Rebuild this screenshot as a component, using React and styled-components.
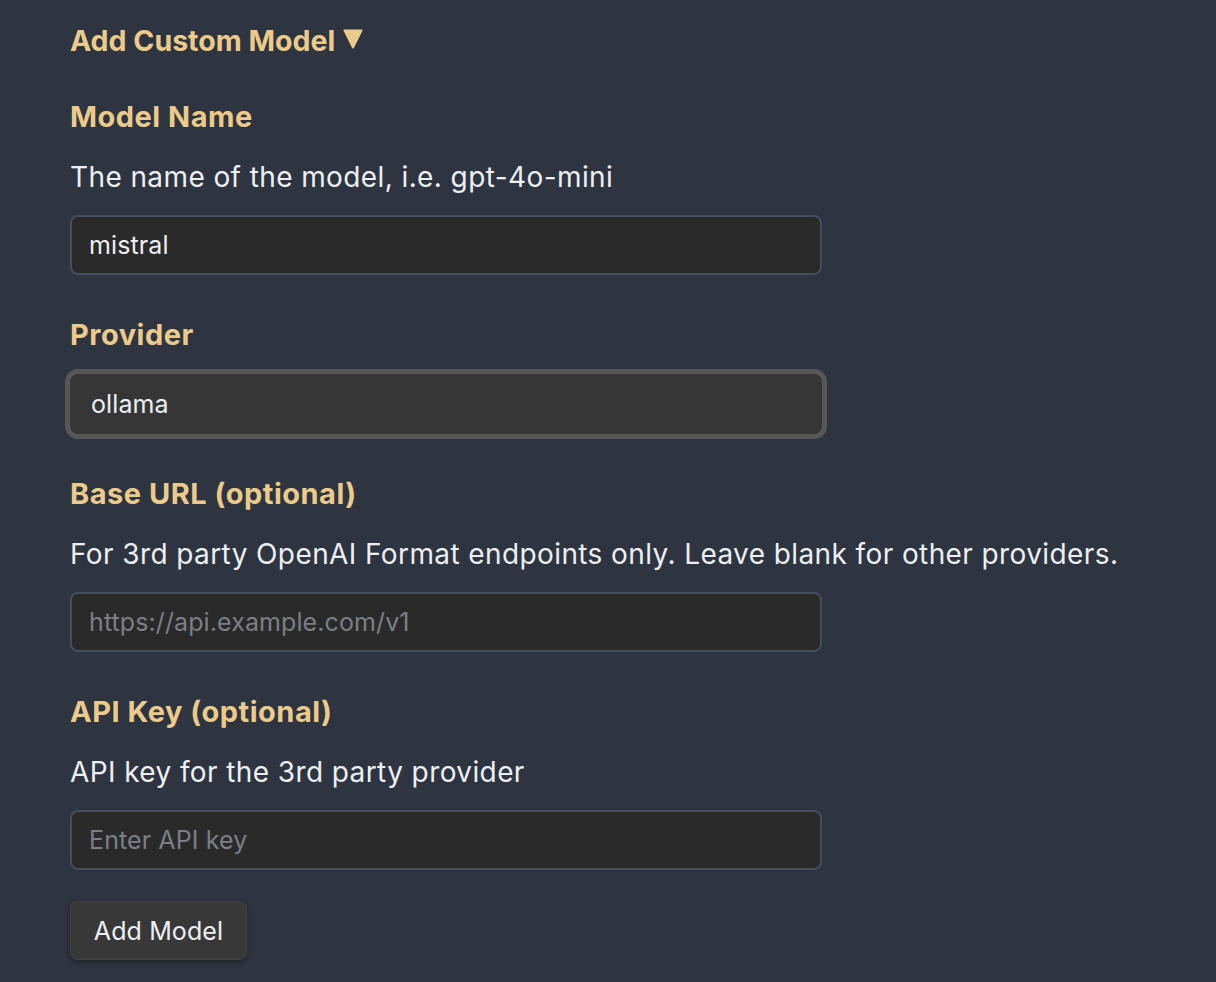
import styled, { createGlobalStyle } from "styled-components";

const GlobalStyle = createGlobalStyle`
  html, body {
    margin: 0;
    padding: 0;
    background: #2e3440;
  }
  body {
    font-family: Inter, "Noto Sans", "Liberation Sans", sans-serif;
    color: #eceff4;
  }
`;

const Page = styled.div`
  min-height: 982px;
  padding: 20px 0 0 70px;
  box-sizing: border-box;
  background: #2e3440;
`;

const Summary = styled.div`
  display: flex;
  align-items: center;
  gap: 8px;
  height: 40px;
  font-size: 28.5px;
  font-weight: 700;
  color: #ebcb8b;
  margin-bottom: 37px;
  svg {
    margin-top: -2px;
  }
`;

const Field = styled.div`
  display: flex;
  flex-direction: column;
  width: 752px;
  margin-bottom: 40px;
  &:last-of-type {
    margin-bottom: 31px;
  }
`;

const Label = styled.div`
  height: 40px;
  line-height: 40px;
  font-size: 29px;
  font-weight: 700;
  letter-spacing: 0.5px;
  color: #ebcb8b;
  margin-bottom: ${(p) => (p.$tight ? "19px" : "20px")};
`;

const Description = styled.div`
  height: 40px;
  line-height: 40px;
  font-size: 28px;
  letter-spacing: 0.4px;
  color: #eceff4;
  white-space: nowrap;
  margin-bottom: 18px;
`;

const TextInput = styled.input`
  box-sizing: border-box;
  width: 752px;
  height: 60px;
  padding: 0 17px;
  background: #2a2a2a;
  border: 2px solid #454d5f;
  border-radius: 8px;
  color: #eceff4;
  font-family: inherit;
  font-size: 25px;
  letter-spacing: 0.1px;
  outline: none;
  &::placeholder {
    color: #7c7f86;
  }
`;

const SelectBox = styled.div`
  box-sizing: border-box;
  width: 752px;
  height: 60px;
  display: flex;
  align-items: center;
  padding: 0 21px;
  background: #363636;
  border-radius: 8px;
  outline: 5px solid #575757;
  font-size: 25px;
  letter-spacing: 0.1px;
  color: #eceff4;
`;

const Button = styled.button`
  box-sizing: border-box;
  width: 177px;
  height: 59px;
  background: #383838;
  border: 1px solid #444;
  border-radius: 8px;
  color: #eceff4;
  font-family: inherit;
  font-size: 25px;
  letter-spacing: 0.1px;
  box-shadow: 0 2px 5px rgba(0, 0, 0, 0.35);
  cursor: pointer;
`;

function Caret() {
  return (
    <svg width="20" height="20" viewBox="0 0 20 20">
      <path d="M1.5 1.5 H18.5 L10 18.5 Z" fill="#ebcb8b" stroke="#ebcb8b" strokeWidth="2" strokeLinejoin="round" />
    </svg>
  );
}

export default function App() {
  return (
    <>
      <GlobalStyle />
      <Page>
        <Summary>
          Add Custom Model <Caret />
        </Summary>
        <Field>
          <Label>Model Name</Label>
          <Description>The name of the model, i.e. gpt-4o-mini</Description>
          <TextInput defaultValue="mistral" />
        </Field>
        <Field>
          <Label $tight>Provider</Label>
          <SelectBox>ollama</SelectBox>
        </Field>
        <Field>
          <Label>Base URL (optional)</Label>
          <Description>
            For 3rd party OpenAI Format endpoints only. Leave blank for other providers.
          </Description>
          <TextInput placeholder="https://api.example.com/v1" />
        </Field>
        <Field>
          <Label>API Key (optional)</Label>
          <Description>API key for the 3rd party provider</Description>
          <TextInput placeholder="Enter API key" />
        </Field>
        <Button>Add Model</Button>
      </Page>
    </>
  );
}
